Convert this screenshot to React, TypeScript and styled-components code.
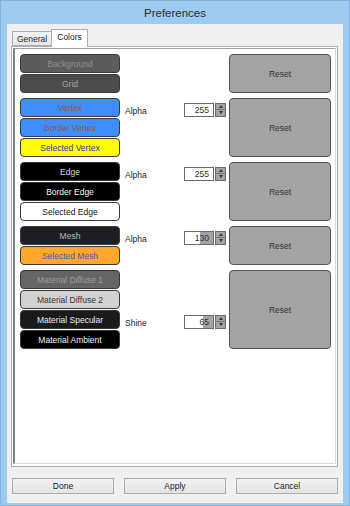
import styled, { createGlobalStyle } from "styled-components";

const GlobalStyle = createGlobalStyle`
  html, body {
    margin: 0;
    padding: 0;
    background: #9dcbf0;
  }
  * {
    box-sizing: border-box;
  }
`;

const Window = styled.div`
  width: 350px;
  height: 506px;
  display: flex;
  flex-direction: column;
  background: #9dcbf0;
  border: 1px solid #82b3e0;
  font-family: "Liberation Sans", Arial, sans-serif;
  font-size: 8.5px;
  color: #222;
`;

const TitleBar = styled.div`
  height: 23px;
  display: flex;
  align-items: center;
  justify-content: center;
  font-size: 11.5px;
  color: #2b2b2b;
  padding-top: 1px;
`;

const Client = styled.div`
  flex: 1;
  margin: 0 6px 2px 6px;
  background: #f0f0f0;
  display: flex;
  flex-direction: column;
  padding: 4px 5px 0 4px;
`;

const TabBar = styled.div`
  display: flex;
  align-items: flex-end;
  height: 18px;
  padding-left: 1px;
  position: relative;
  z-index: 1;
`;

const Tab = styled.div<{ $active?: boolean }>`
  height: ${(p) => (p.$active ? "18px" : "15px")};
  padding: ${(p) => (p.$active ? "2px 5px 0 5px" : "2px 4px 0 4px")};
  margin-bottom: ${(p) => (p.$active ? "-1px" : "0")};
  background: ${(p) => (p.$active ? "#ffffff" : "linear-gradient(#f3f3f3, #e8e8e8)")};
  border: 1px solid #acacac;
  border-bottom: ${(p) => (p.$active ? "none" : "1px solid #acacac")};
  margin-left: ${(p) => (p.$active ? "-1px" : "0")};
  font-size: 8.5px;
  color: #222;
`;

const Pane = styled.div`
  height: 421px;
  background: #ffffff;
  border: 1px solid #acacac;
  padding: 1px 1px 2px 1px;
  display: flex;
`;

const Frame = styled.div`
  flex: 1;
  border-left: 2px solid #828282;
  border-top: 1px solid #a0a0a0;
  border-right: 1px solid #dadada;
  border-bottom: 1px solid #dadada;
  padding: 5px 0 0 5px;
  display: flex;
  flex-direction: column;
  gap: 5px;
`;

const Group = styled.div`
  display: grid;
  grid-template-columns: 100px 109px 102px;
`;

const ColorStack = styled.div`
  display: flex;
  flex-direction: column;
  gap: 1px;
`;

const ColorButton = styled.div<{ $bg: string; $fg: string }>`
  height: 19px;
  display: flex;
  align-items: center;
  justify-content: center;
  background: ${(p) => p.$bg};
  color: ${(p) => p.$fg};
  border: 1px solid #3a3a3a;
  border-radius: 4px;
  font-size: 8.5px;
`;

const Controls = styled.div<{ $row: number }>`
  height: 19px;
  margin-top: ${(p) => p.$row * 20 + 2}px;
  display: flex;
  align-items: center;
  padding-left: 5px;
`;

const Label = styled.span`
  width: 59px;
  font-size: 8.5px;
  color: #222;
  padding-top: 2px;
`;

const Spin = styled.div`
  display: flex;
  gap: 1px;
  height: 14px;
`;

const SpinField = styled.div<{ $fill: number }>`
  width: 30px;
  height: 14px;
  border: 1px solid #6a6a6a;
  background: ${(p) =>
    p.$fill < 100
      ? `linear-gradient(to right, #fff ${p.$fill}%, #a3a3a3 ${p.$fill}%)`
      : "#fff"};
  display: flex;
  align-items: center;
  justify-content: flex-end;
  padding-right: 4px;
  font-size: 8.5px;
  color: #2c2c44;
`;

const SpinArrows = styled.div`
  width: 11px;
  height: 14px;
  border: 1px solid #6a6a6a;
  background: #a3a3a3;
  display: flex;
  flex-direction: column;
`;

const Arrow = styled.div<{ $down?: boolean }>`
  flex: 1;
  display: flex;
  align-items: center;
  justify-content: center;
  border-top: ${(p) => (p.$down ? "1px solid #7a7a7a" : "none")};
  &::after {
    content: "";
    border-left: 2.5px solid transparent;
    border-right: 2.5px solid transparent;
    ${(p) =>
      p.$down ? "border-top: 3px solid #333;" : "border-bottom: 3px solid #333;"}
  }
`;

const ResetButton = styled.div`
  display: flex;
  align-items: center;
  justify-content: center;
  background: #a3a3a3;
  border: 1px solid #555;
  border-radius: 4px;
  color: #333;
  font-size: 8.5px;
`;

const Footer = styled.div`
  display: grid;
  grid-template-columns: 1fr 1fr 1fr;
  gap: 10px;
  margin-top: 11px;
  padding-left: 1px;
`;

const DialogButton = styled.div`
  height: 16px;
  display: flex;
  align-items: center;
  justify-content: center;
  background: linear-gradient(#f2f2f2, #e4e4e4);
  border: 1px solid #acacac;
  font-size: 8.5px;
  color: #222;
`;

interface IColorItem {
  label: string;
  bg: string;
  fg: string;
}

interface IGroup {
  items: IColorItem[];
  control?: { label: string; value: number; row: number; fill: number };
}

const groups: IGroup[] = [
  {
    items: [
      { label: "Background", bg: "#5c5c5c", fg: "#8e8e8e" },
      { label: "Grid", bg: "#4c4c4c", fg: "#a8a8a8" },
    ],
  },
  {
    items: [
      { label: "Vertex", bg: "#3f8eff", fg: "#8a5a38" },
      { label: "Border Vertex", bg: "#3f8eff", fg: "#9a5530" },
      { label: "Selected Vertex", bg: "#ffff00", fg: "#3535b5" },
    ],
    control: { label: "Alpha", value: 255, row: 0, fill: 100 },
  },
  {
    items: [
      { label: "Edge", bg: "#000000", fg: "#dcdcdc" },
      { label: "Border Edge", bg: "#000000", fg: "#f4f4f4" },
      { label: "Selected Edge", bg: "#ffffff", fg: "#111111" },
    ],
    control: { label: "Alpha", value: 255, row: 0, fill: 100 },
  },
  {
    items: [
      { label: "Mesh", bg: "#1d1f24", fg: "#b8b8b8" },
      { label: "Selected Mesh", bg: "#ffa62b", fg: "#3b5cc0" },
    ],
    control: { label: "Alpha", value: 130, row: 0, fill: 55 },
  },
  {
    items: [
      { label: "Material Diffuse 1", bg: "#656565", fg: "#9c9c9c" },
      { label: "Material Diffuse 2", bg: "#d2d2d2", fg: "#333333" },
      { label: "Material Specular", bg: "#1a1a1a", fg: "#ececec" },
      { label: "Material Ambient", bg: "#000000", fg: "#eef2ff" },
    ],
    control: { label: "Shine", value: 65, row: 2, fill: 65 },
  },
];

const App = () => {
  return (
    <>
      <GlobalStyle />
      <Window>
        <TitleBar>Preferences</TitleBar>
        <Client>
          <TabBar>
            <Tab>General</Tab>
            <Tab $active>Colors</Tab>
          </TabBar>
          <Pane>
            <Frame>
              {groups.map((group, i) => (
                <Group key={i}>
                  <ColorStack>
                    {group.items.map((item) => (
                      <ColorButton key={item.label} $bg={item.bg} $fg={item.fg}>
                        {item.label}
                      </ColorButton>
                    ))}
                  </ColorStack>
                  {group.control ? (
                    <Controls $row={group.control.row}>
                      <Label>{group.control.label}</Label>
                      <Spin>
                        <SpinField $fill={group.control.fill}>
                          {group.control.value}
                        </SpinField>
                        <SpinArrows>
                          <Arrow />
                          <Arrow $down />
                        </SpinArrows>
                      </Spin>
                    </Controls>
                  ) : (
                    <div />
                  )}
                  <ResetButton>Reset</ResetButton>
                </Group>
              ))}
            </Frame>
          </Pane>
          <Footer>
            <DialogButton>Done</DialogButton>
            <DialogButton>Apply</DialogButton>
            <DialogButton>Cancel</DialogButton>
          </Footer>
        </Client>
      </Window>
    </>
  );
};

export default App;
